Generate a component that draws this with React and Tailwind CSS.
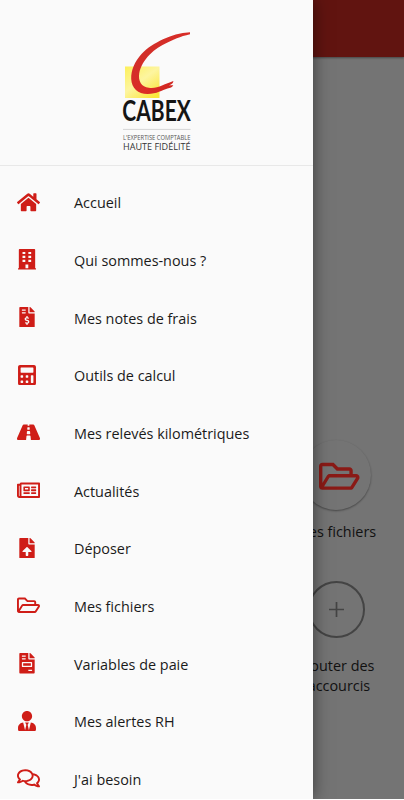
import React from "react";
import {
  FaHome, FaFileInvoiceDollar, FaCalculator, FaRoad, FaRegNewspaper,
  FaFileUpload, FaRegFolderOpen, FaFileInvoice, FaUserTie, FaRegComments,
} from "react-icons/fa";

function Building({ className }) {
  return (
    <svg viewBox="0 0 448 512" fill="currentColor" className={className}>
      <path
        fillRule="evenodd"
        d="M20 20Q20 0 40 0H408Q428 0 428 20V482H448V512H0V482H20ZM112 72V126H182V72ZM258 72V126H328V72ZM112 170V224H182V170ZM258 170V224H328V170ZM112 268V322H182V268ZM258 268V322H328V268ZM186 384V482H256V384Z"
      />
    </svg>
  );
}

const wide = "w-[23px]";
const medium = "ml-[0.5px] w-[18px]";
const narrow = "ml-[1.5px] w-[16px]";

const items = [
  [FaHome, "Accueil", wide],
  [Building, "Qui sommes-nous ?", medium],
  [FaFileInvoiceDollar, "Mes notes de frais", narrow],
  [FaCalculator, "Outils de calcul", medium],
  [FaRoad, "Mes relevés kilométriques", wide],
  [FaRegNewspaper, "Actualités", wide],
  [FaFileUpload, "Déposer", narrow],
  [FaRegFolderOpen, "Mes fichiers", wide],
  [FaFileInvoice, "Variables de paie", narrow],
  [FaUserTie, "Mes alertes RH", medium],
  [FaRegComments, "J'ai besoin", wide],
];

function Logo() {
  return (
    <svg width="74" height="130" viewBox="0 0 74 130" className="block overflow-visible">
      <defs>
        <linearGradient id="sun" x1="0" y1="0" x2="0.8" y2="1">
          <stop offset="0" stopColor="#fdf05a" />
          <stop offset="0.5" stopColor="#fdf5a0" />
          <stop offset="1" stopColor="#fbe63a" />
        </linearGradient>
        <linearGradient id="stroke" x1="0" y1="0" x2="1" y2="1">
          <stop offset="0" stopColor="#c9302b" />
          <stop offset="0.6" stopColor="#dc2c26" />
          <stop offset="1" stopColor="#c0211c" />
        </linearGradient>
      </defs>
      <rect x="5" y="36.500" width="34.500" height="31.500" fill="url(#sun)" />
      <path
        d="M70 2.300C60 3 51 5.500 43 9.300C34.500 13.500 27.500 17.500 21.500 24C14.500 32 11 40 11.200 49C11.600 58 18 64 27.500 64C37 64 42 60 47.500 58.500C50 58 52.500 57.500 53.300 55.300L48.800 55.300C51 54.500 53.500 53.500 53.300 51C49 53 46 53.500 42 55.500C38 57.500 33 58.300 28.800 57.700C21.500 57 18 51 19.200 43.500C20.500 36 24.500 30 29.800 24.500C35 19 41 16 46 13.300C53 9.500 60 6.500 70 4.200Z"
        fill="url(#stroke)"
      />
      <text x="2.300" y="90.700" textLength="68.500" lengthAdjust="spacingAndGlyphs" fontFamily="Lato" fontWeight="700" fontSize="28" fill="#151515">CABEX</text>
      <path d="M3 99.400H70.500" stroke="#bbb" strokeWidth="0.600" />
      <text x="3" y="109.800" textLength="67.500" lengthAdjust="spacingAndGlyphs" fontFamily="Open Sans" fontSize="6.200" fill="#555">L'EXPERTISE COMPTABLE</text>
      <text x="3" y="119.900" textLength="67.500" lengthAdjust="spacingAndGlyphs" fontFamily="Open Sans" fontSize="9.400" fill="#333">HAUTE FIDÉLITÉ</text>
    </svg>
  );
}

export default function App() {
  return (
    <div className="relative h-[800px] w-[404px] overflow-hidden border-b border-white bg-[#747474] font-['Open_Sans',sans-serif] text-[14.4px] text-[#1a1a1a]">
      <main className="flex h-full flex-col">
        <header className="h-[57px] shrink-0 bg-[#611410] shadow-[0_1px_2px_rgba(0,0,0,0.4)]" />
        <section className="ml-[269px] mt-[383px] flex w-[134px] flex-col items-center text-[#111]">
          <div className="flex size-[70px] items-center justify-center rounded-full shadow-[0_1px_2px_rgba(0,0,0,0.4)]">
            <FaRegFolderOpen className="ml-[7px] mt-[2px] size-[40.5px] text-[#8a1a16]" />
          </div>
          <p className="mt-[12px] leading-5">Mes fichiers</p>
          <div className="mt-[39px] flex size-[57px] items-center justify-center rounded-full border-2 border-[#444]">
            <svg width="15" height="15" viewBox="0 0 15 15" stroke="#444" strokeWidth="1.700">
              <path d="M7.500 0V15M0 7.500H15" />
            </svg>
          </div>
          <p className="mt-[18px] text-center leading-5">Ajouter des<br />raccourcis</p>
        </section>
      </main>
      <aside className="absolute inset-y-0 left-0 flex w-[313px] flex-col overflow-hidden bg-[#fafafa] shadow-[0_0_16px_rgba(0,0,0,0.5)]">
        <div className="flex h-[166px] shrink-0 justify-center border-b border-[#e8e8e8] pt-[30px]">
          <Logo />
        </div>
        <nav className="pt-[8.2px]">
          {items.map(([Icon, label, size]) => (
            <a key={label} className="flex h-[57.7px] items-center">
              <span className="flex w-[74px] shrink-0 pb-[2.4px] pl-[17px]">
                <Icon className={`h-[20.5px] shrink-0 text-[#cf1d17] ${size}`} />
              </span>
              <span>{label}</span>
            </a>
          ))}
        </nav>
      </aside>
    </div>
  );
}
